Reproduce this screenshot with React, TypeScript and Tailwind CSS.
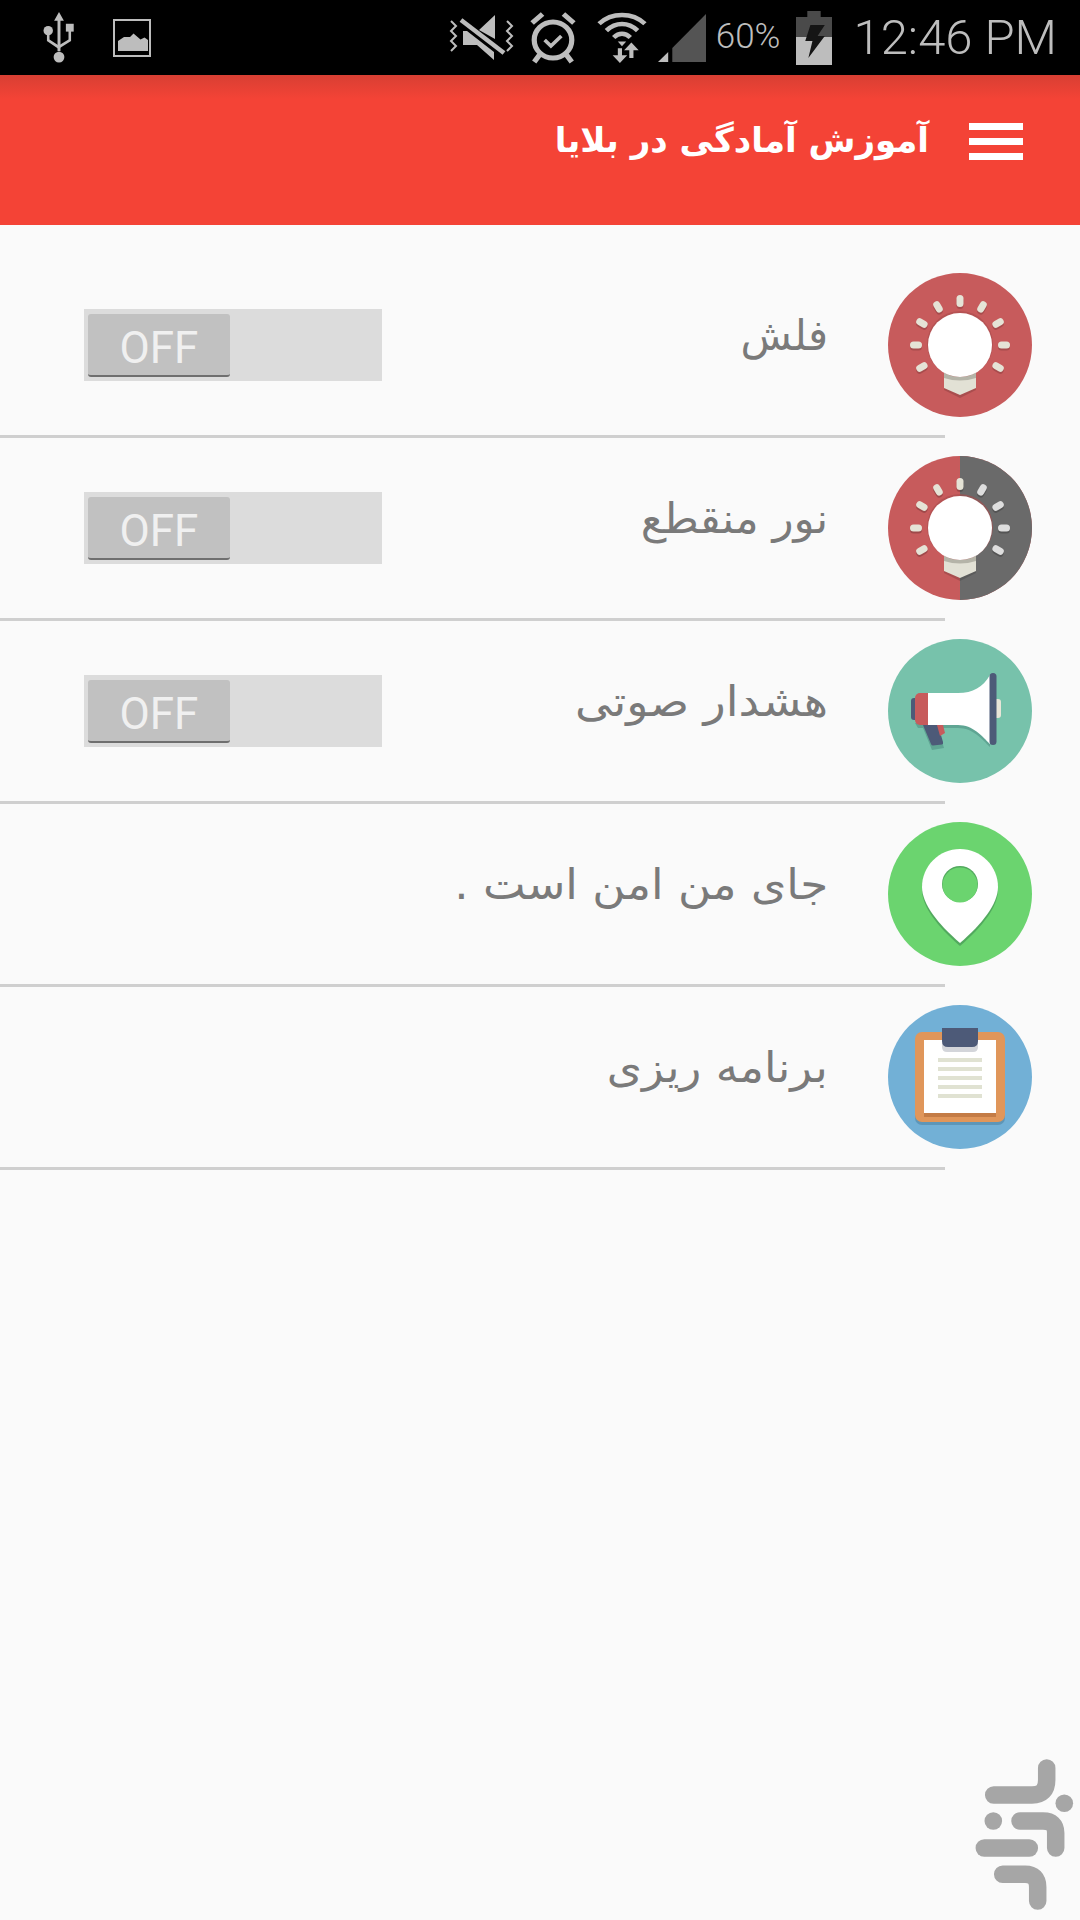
import type { ReactNode } from "react";

const GREY = "#bdbdbd";

function UsbIcon() {
  return (
    <svg width="32" height="51" viewBox="0 0 32 52" fill={GREY}>
      <path d="M16 0l5 9h-3.5v31h-3V9H11z" />
      <circle cx="16" cy="46" r="5.5" />
      <circle cx="5" cy="19" r="4.8" />
      <rect x="23" y="12" width="8" height="8" />
      <path d="M3.7 22h2.6v6l9 6v3.4L3.7 29.5zM25.7 19h2.6v10.5L16.5 37v-3.4l9.2-5.6z" />
    </svg>
  );
}

function ImageIcon() {
  return (
    <svg width="38" height="38" viewBox="0 0 38 38" fill={GREY}>
      <path fillRule="evenodd" d="M0 0h38v38H0zM2 2v34h34V2z" />
      <path d="M5 32V22l6-4 6 0 3.5 -3.5 7 6 4-2 3.500 2.500V32z" />
    </svg>
  );
}

function MuteIcon() {
  return (
    <svg width="68" height="46" viewBox="0 0 68 46" fill="none">
      <path d="M3 6l5 5-5 5 5 5-5 5 5 5-5 5" stroke={GREY} strokeWidth="2" />
      <path d="M62 6l5 5-5 5 5 5-5 5 5 5-5 5" stroke={GREY} strokeWidth="2" transform="translate(-3 0)" />
      <path d="M15 16v14h14l17 15v-8L19 16zM31 15L47 0v24z" fill={GREY} />
      <path d="M13 5l43 33" stroke={GREY} strokeWidth="4.500" />
    </svg>
  );
}

function AlarmIcon() {
  return (
    <svg width="48" height="54" viewBox="0 0 46 54" fill="none" stroke={GREY} preserveAspectRatio="none">
      <circle cx="23" cy="29" r="18" strokeWidth="5" />
      <path d="M15 29l6 6 10-10" strokeWidth="3.500" />
      <path d="M3 12L13 3M43 12L33 3" strokeWidth="5" />
      <path d="M10 44l-5 7M36 44l5 7" strokeWidth="5" />
    </svg>
  );
}

function WifiIcon() {
  return (
    <svg width="50" height="53" viewBox="0 0 48 54" fill="none" preserveAspectRatio="none">
      <path d="M2 13C14 1 34 1 46 13" stroke={GREY} strokeWidth="4.500" />
      <path d="M9 20C18 11 30 11 39 20" stroke={GREY} strokeWidth="4.500" />
      <path d="M16 27C21 22 27 22 32 27" stroke={GREY} strokeWidth="4.500" />
      <path d="M20 31h8l-4 5z" fill={GREY} />
      <path d="M20 38h4v7h5l-7 8-7-8h5z" fill={GREY} />
      <path d="M33 32l7 8h-5v8h-4v-8h-5z" fill={GREY} />
    </svg>
  );
}

function SignalIcon() {
  return (
    <svg width="48" height="48" viewBox="0 0 47 48" preserveAspectRatio="none">
      <path d="M14 48V34L47 0v48z" fill="#545454" />
      <path d="M0 48L10 38v10z" fill={GREY} />
    </svg>
  );
}

function BatteryIcon() {
  return (
    <svg width="36" height="54" viewBox="0 0 35 54" preserveAspectRatio="none">
      <path d="M11 0h13v6h11v28H0V6h11z" fill="#4a4a4a" />
      <rect x="0" y="26" width="35" height="28" fill={GREY} />
      <path d="M14 14h14l-7 11h7L12 47l4-17H9z" fill="#151515" />
    </svg>
  );
}

function StatusBar() {
  return (
    <div className="flex h-[75px] items-center justify-between bg-black pl-[43px] pr-[23px]">
      <div className="flex items-center gap-[38px]">
        <UsbIcon />
        <ImageIcon />
      </div>
      <div className="flex items-center">
        <MuteIcon />
        <div className="ml-[13px]">
          <AlarmIcon />
        </div>
        <div className="ml-[20px]">
          <WifiIcon />
        </div>
        <div className="ml-[11px]">
          <SignalIcon />
        </div>
        <span className="ml-[10px] font-['Roboto'] text-[35px] font-light text-[#bdbdbd]">60%</span>
        <div className="ml-[16px]">
          <BatteryIcon />
        </div>
        <span className="ml-[21px] font-['Roboto'] text-[49px] font-light leading-none text-[#bdbdbd]">12:46 PM</span>
      </div>
    </div>
  );
}

function Header() {
  return (
    <div className="flex h-[150px] items-start justify-end gap-[40px] bg-[#f44336] bg-[linear-gradient(#d83f33,#f44336_24px)] pr-[57px] pt-[48px]">
      <h1
        dir="rtl"
        className="-mt-[1px] font-['DejaVu_Sans',sans-serif] text-[34px] font-bold leading-[36px] text-white"
      >
        آموزش آمادگی در بلایا
      </h1>
      <div className="flex flex-col gap-[8px]">
        <div className="h-[7px] w-[54px] bg-white" />
        <div className="h-[7px] w-[54px] bg-white" />
        <div className="h-[7px] w-[54px] bg-white" />
      </div>
    </div>
  );
}

function Toggle() {
  return (
    <div className="flex h-[72px] w-[298px] items-start bg-[#dcdcdc] pl-[4px] pt-[5px]">
      <div className="flex h-[63px] w-[142px] items-center justify-center rounded-[3px] border-b-2 border-[#6f6f6f] bg-[#c1c1c1] pt-[6px] font-['Roboto'] text-[44px] text-[#f0f0f0]">
        OFF
      </div>
    </div>
  );
}

function BulbIcon({ split }: { split?: boolean }) {
  const rays = [-90, -60, -30, 0, 30, 150, 180, 210, 240];
  return (
    <svg width="144" height="144" viewBox="0 0 144 144">
      <circle cx="72" cy="72" r="72" fill="#c75b5c" />
      {split && <path d="M72 0a72 72 0 0 1 0 144z" fill="#6a6a6a" />}
      {rays.map((a) => (
        <g key={a} transform={`rotate(${a} 72 72)`}>
          <rect x="110" y="68.500" width="12" height="7" rx="3.500" fill={split ? "#000" : "#a84c4d"} fillOpacity={split ? 0.2 : 1} transform={`rotate(${-a} 116 72) translate(0 2) rotate(${a} 116 72)`} />
          <rect x="110" y="68.500" width="12" height="7" rx="3.500" fill={split && (a > -90 && a < 90) ? "#dedede" : "#e5e3d6"} />
        </g>
      ))}
      <path d="M56 100h32v15l-16 8-16-8z" fill="#000" fillOpacity="0.15" transform="translate(0 2)" />
      <path d="M56 100h32v15l-16 7-16-7z" fill="#e2e1d5" />
      <path d="M56 100h32v5q-16 5-32 0z" fill="#b5b4a8" />
      <circle cx="72" cy="71" r="33" fill="#a84c4d" fillOpacity="0.6" />
      <circle cx="72" cy="72" r="32" fill="#fff" />
    </svg>
  );
}

function MegaphoneIcon() {
  const body = "M40 54H70C85 54 95 48 102 36V105C94 97 85 86 70 86H40z";
  return (
    <svg width="144" height="144" viewBox="0 0 144 144">
      <circle cx="72" cy="72" r="72" fill="#77c2ab" />
      <path d={body} fill="#5fa593" transform="translate(0 3)" />
      <path d="M27 84h13v5H30z" fill="#5fa593" />
      <path d="M35 86h15l6 20-12 2z" fill="#5fa593" transform="translate(0 3)" />
      <path d="M35 86h15l5 17q.5 2-1 2.500l-9 1q-1.500 0-2-1.500z" fill="#4d5a78" />
      <path d="M49 86h6l2 8-5 3z" fill="#c75b5c" />
      <rect x="23" y="59" width="8" height="22" rx="3" fill="#4d5a78" />
      <path d="M32 54h8v32h-8a5 5 0 0 1-5-5V59a5 5 0 0 1 5-5z" fill="#c75b5c" />
      <path d={body} fill="#fff" />
      <rect x="105" y="60" width="8" height="19" rx="3" fill="#e8e5d8" />
      <rect x="101.500" y="34" width="7" height="72" rx="3.500" fill="#4d5a78" />
    </svg>
  );
}

function PinIcon() {
  const pin = "M72 27C51 27 34 44 34 65C34 82 50 102 72 121C94 102 110 82 110 65C110 44 93 27 72 27z";
  return (
    <svg width="144" height="144" viewBox="0 0 144 144">
      <circle cx="72" cy="72" r="72" fill="#6bd46f" />
      <path d={pin} fill="#52a95e" transform="translate(0 3)" />
      <path d={pin} fill="#fff" />
      <circle cx="72" cy="62" r="18" fill="#52a95e" />
      <circle cx="72" cy="63" r="17.500" fill="#6bd46f" />
    </svg>
  );
}

function ClipboardIcon() {
  return (
    <svg width="144" height="144" viewBox="0 0 144 144">
      <circle cx="72" cy="72" r="72" fill="#72b0d6" />
      <rect x="27" y="30" width="90" height="90" rx="7" fill="#5d96b8" />
      <rect x="27" y="27" width="90" height="90" rx="7" fill="#e0965a" />
      <rect x="36" y="36" width="72" height="76" fill="#c47c46" />
      <rect x="36" y="35" width="72" height="73" fill="#fff" />
      <path d="M54 30h36v12q0 5-5 5H59q-5 0-5-5z" fill="#d3d5da" />
      <path d="M54 23h36v13q0 6-6 6H60q-6 0-6-6z" fill="#4d5a78" />
      {[53, 62, 71, 80, 89].map((y) => (
        <rect key={y} x="50" y={y} width="44" height="4" fill="#e0e2d2" />
      ))}
    </svg>
  );
}

function BazaarLogo() {
  return (
    <svg width="120" height="180" viewBox="0 0 120 180" className="absolute bottom-0 right-0">
      <g fill="none" stroke="#a6a6a6" strokeWidth="17.500" strokeLinecap="round">
        <path d="M86.700 28V40Q86.700 55 72 55H33.700" />
        <path d="M60 81H83Q95.700 81 95.700 93V108" />
        <path d="M24.300 108H69.300" />
        <path d="M42.700 134.300H65Q77.700 134.300 77.700 147V161" />
      </g>
      <circle cx="104.300" cy="63.300" r="8.800" fill="#a6a6a6" />
      <circle cx="33.300" cy="81" r="8.800" fill="#a6a6a6" />
    </svg>
  );
}

function Row({ label, icon, toggle, stretch }: { label: string; icon: ReactNode; toggle?: boolean; stretch: string }) {
  return (
    <div>
      <div className="flex h-[180px] items-center justify-between pl-[84px] pr-[48px]">
        <div>{toggle && <Toggle />}</div>
        <div className="flex items-center gap-[60px]">
          {/* the original glyphs run wider than DejaVu, so stretch each label to width */}
          <span
            dir="rtl"
            className={`-mt-[18px] origin-right font-['DejaVu_Sans',sans-serif] text-[42px] leading-[48px] text-[#7a7a7a] ${stretch}`}
          >
            {label}
          </span>
          {icon}
        </div>
      </div>
      <div className="h-[3px] w-[945px] bg-[#cfcfcf]" />
    </div>
  );
}

export default function App() {
  return (
    <div className="relative h-[1920px] w-[1080px] overflow-hidden bg-[#fafafa]">
      <StatusBar />
      <Header />
      <div className="pt-[30px]">
        <Row label="فلش" icon={<BulbIcon />} toggle stretch="scale-x-100" />
        <Row label="نور منقطع" icon={<BulbIcon split />} toggle stretch="scale-x-[1.04]" />
        <Row label="هشدار صوتی" icon={<MegaphoneIcon />} toggle stretch="scale-x-[1.095]" />
        <Row label="جای من امن است ." icon={<PinIcon />} stretch="scale-x-[1.077]" />
        <Row label="برنامه ریزی" icon={<ClipboardIcon />} stretch="scale-x-[1.074]" />
      </div>
      <BazaarLogo />
    </div>
  );
}
